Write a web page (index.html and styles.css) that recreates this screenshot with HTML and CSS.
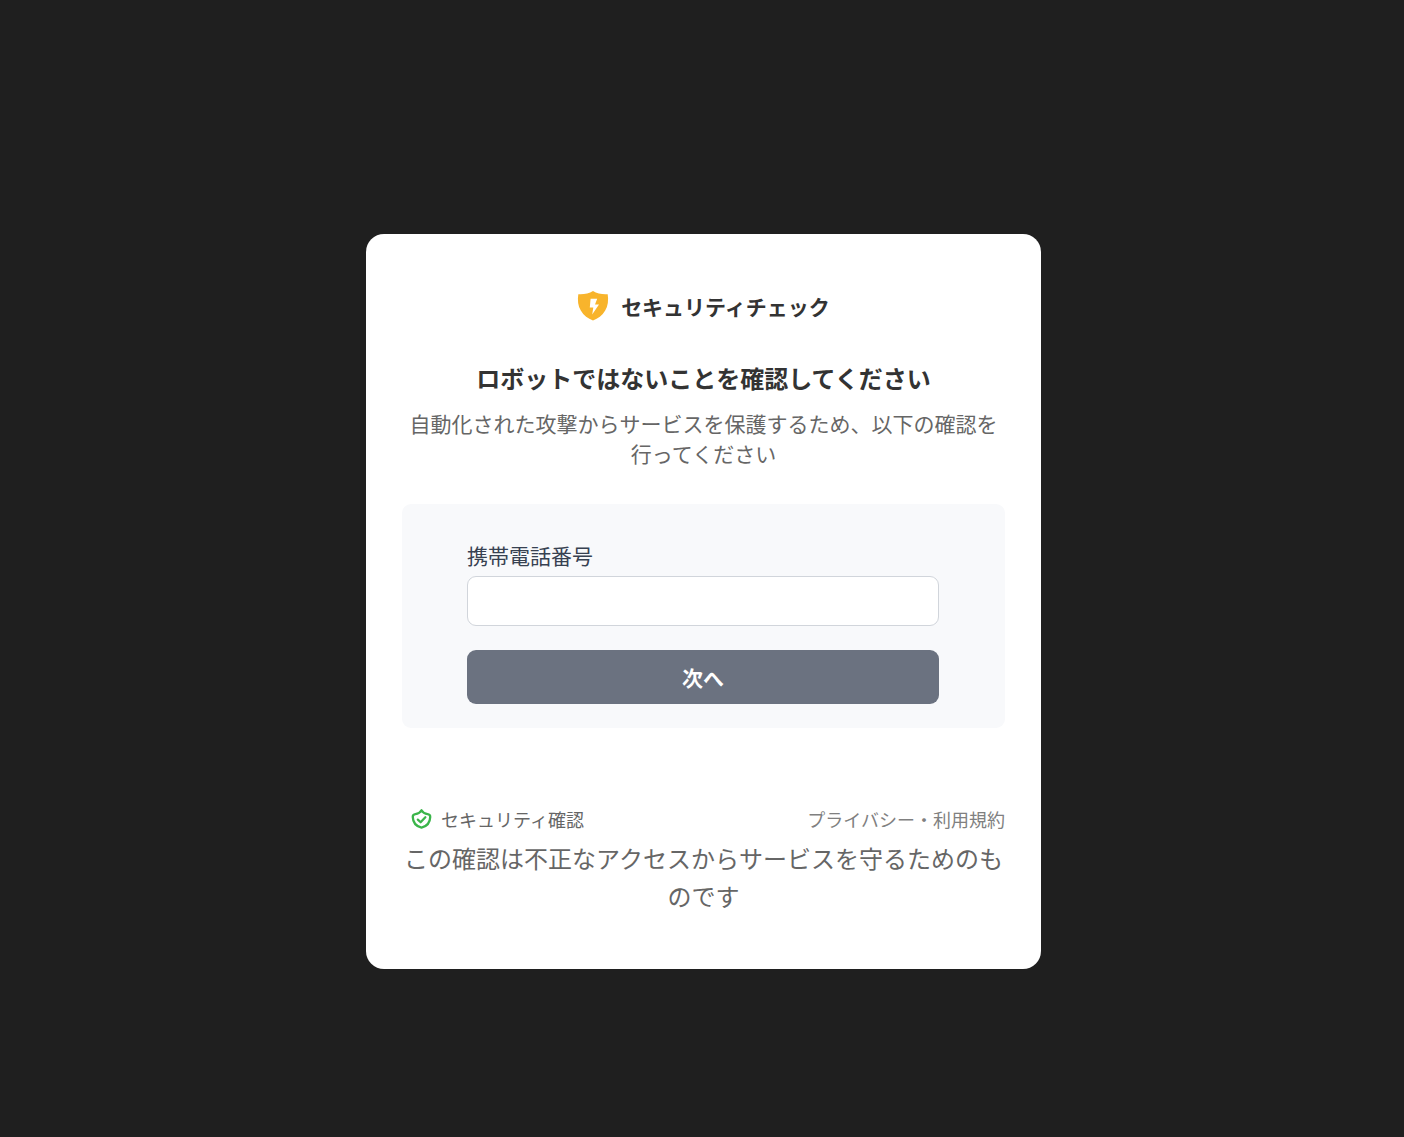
FILE: index.html
```html
<!DOCTYPE html>
<html lang="ja">
<head>
<meta charset="utf-8">
<meta name="viewport" content="width=device-width, initial-scale=1">
<title>セキュリティチェック</title>
<link rel="stylesheet" href="styles.css">
</head>
<body>
<main class="card">
  <header class="brand">
    <svg class="brand-icon" viewBox="0 0 32 32" aria-hidden="true">
      <path fill="#f8b42c" d="M16 1C12 3.600 6.500 4.600 1.300 4.200C0.400 10 1 16 3.800 20.500C6.700 25.400 11 28.700 16 30.500C21 28.700 25.300 25.400 28.200 20.500C31 16 31.600 10 30.700 4.200C25.500 4.600 20 3.600 16 1Z"/>
      <path fill="#fff" d="M13.600 8.800H20.200L18 14.600H22L15.200 24.400L16.300 17.600H12.800Z"/>
    </svg>
    <span class="brand-name">セキュリティチェック</span>
  </header>
  <h1 class="title">ロボットではないことを確認してください</h1>
  <p class="lead">自動化された攻撃からサービスを保護するため、以下の確認を行ってください</p>
  <form class="panel">
    <label class="label" for="phone">携帯電話番号</label>
    <input class="input" id="phone" name="phone" type="tel">
    <button class="button" type="button">次へ</button>
  </form>
  <footer class="footer">
    <div class="footer-row">
      <span class="badge">
        <svg class="badge-icon" viewBox="0 0 24 24" fill="none" stroke="#3bb54a" stroke-width="2.600" stroke-linecap="round" stroke-linejoin="round" aria-hidden="true">
          <path d="M12 1.500C10.800 3.700 8.500 5.500 5 5.900C3 6.100 2 7 2 9C2.200 15 6 19.800 12 21.300C18 19.800 21.800 15 22 9C22 7 21 6.100 19 5.900C15.500 5.500 13.200 3.700 12 1.500Z"/>
          <path d="M7.800 12.100L11 15.100L16.400 9.500"/>
        </svg>
        セキュリティ確認
      </span>
      <a class="terms" href="#">プライバシー・利用規約</a>
    </div>
    <p class="note">この確認は不正なアクセスからサービスを守るためのものです</p>
  </footer>
</main>
</body>
</html>
```
FILE: styles.css
```css
* {
  box-sizing: border-box;
}

body {
  margin: 0;
  min-height: 100vh;
  padding: 66px 0 0 3px;
  display: flex;
  align-items: center;
  justify-content: center;
  background: #1f1f1f;
  color: #333;
  font-family: "Noto Sans CJK JP", sans-serif;
}

.card {
  width: 100%;
  max-width: 675px;
  padding: 54px 36px;
  border-radius: 18px;
  background: #fff;
  text-align: center;
}

.brand {
  display: flex;
  align-items: center;
  justify-content: center;
  gap: 12px;
  margin-bottom: 36px;
}

.brand-icon {
  width: 32px;
  height: 32px;
}

.brand-name {
  font-size: 21px;
  line-height: 36px;
  font-weight: 700;
}

.title {
  margin: 0 0 12px;
  font-size: 24px;
  line-height: 36px;
  font-weight: 700;
}

.lead {
  margin: 0 0 36px;
  font-size: 21px;
  line-height: 30px;
  color: #666;
}

.panel {
  display: flex;
  flex-direction: column;
  padding: 36px 66px 24px 65px;
  border-radius: 9px;
  background: #f8f9fb;
  text-align: left;
}

.label {
  margin-bottom: 6px;
  font-size: 21px;
  line-height: 30px;
  color: #374151;
}

.input {
  width: 100%;
  height: 50px;
  margin-bottom: 24px;
  padding: 0 12px;
  border: 1px solid #d1d5db;
  border-radius: 9px;
  background: #fff;
  font: inherit;
  font-size: 21px;
}

.button {
  height: 54px;
  border: 0;
  border-radius: 9px;
  background: #6b7280;
  color: #fff;
  font: inherit;
  font-size: 21px;
  font-weight: 700;
}

.footer {
  margin-top: 76px;
  color: #666;
}

.footer-row {
  display: flex;
  align-items: center;
  justify-content: space-between;
  padding-left: 9px;
  font-size: 18px;
  line-height: 30px;
}

.badge {
  display: flex;
  align-items: center;
  gap: 9px;
}

.badge-icon {
  width: 21px;
  height: 21px;
}

.terms {
  color: #808080;
  text-decoration: none;
}

.note {
  margin: 5px 0 0;
  font-size: 24px;
  line-height: 38px;
}
```
